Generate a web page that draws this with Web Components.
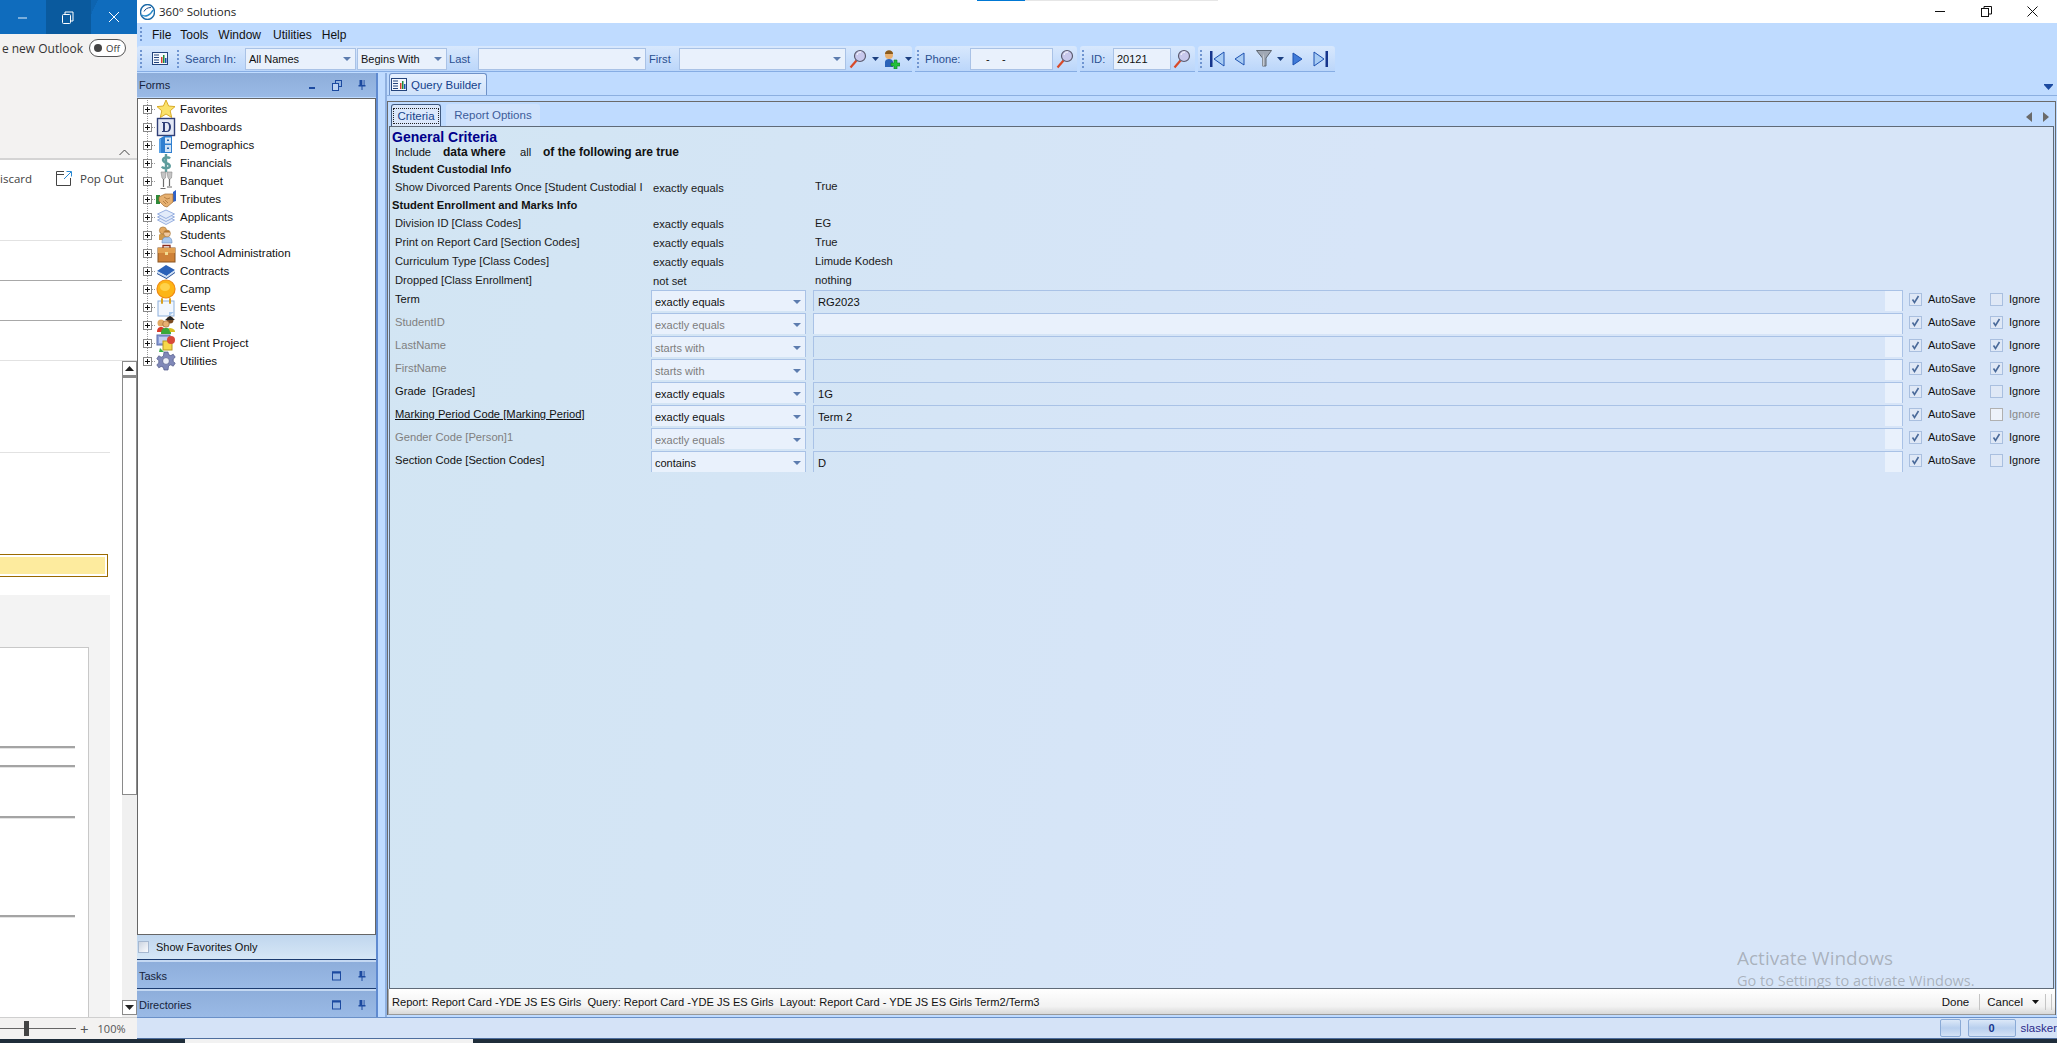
<!DOCTYPE html>
<html>
<head>
<meta charset="utf-8">
<title>360 Solutions</title>
<style>
  html, body { margin: 0; padding: 0; height: 100%; overflow: hidden; background: #1f2d3a; }
  body { font: 11px "Liberation Sans", Arial, sans-serif; color: #111; width: 2057px; height: 1043px; }
  #desk { display: flex; height: 1039px; }
</style>
</head>
<body>
<div id="desk">
  <outlook-side></outlook-side>
  <app-window>
    <title-bar>360° Solutions</title-bar>
    <menu-bar></menu-bar>
    <tool-bar></tool-bar>
    <main-area>
      <forms-pane slot="left">
        <tree-item icon="star">Favorites</tree-item>
        <tree-item icon="dash">Dashboards</tree-item>
        <tree-item icon="demo">Demographics</tree-item>
        <tree-item icon="dollar">Financials</tree-item>
        <tree-item icon="glass">Banquet</tree-item>
        <tree-item icon="hands">Tributes</tree-item>
        <tree-item icon="layers">Applicants</tree-item>
        <tree-item icon="people">Students</tree-item>
        <tree-item icon="case">School Administration</tree-item>
        <tree-item icon="book">Contracts</tree-item>
        <tree-item icon="sun">Camp</tree-item>
        <tree-item icon="cal">Events</tree-item>
        <tree-item icon="note">Note</tree-item>
        <tree-item icon="client">Client Project</tree-item>
        <tree-item icon="gear" last>Utilities</tree-item>
      </forms-pane>
      <query-builder slot="right">
        <info-row kind="title">General Criteria</info-row>
        <info-row kind="include"></info-row>
        <info-row kind="section" first>Student Custodial Info</info-row>
        <info-row op="exactly equals" value="True" tight>Show Divorced Parents Once [Student Custodial I</info-row>
        <info-row kind="section">Student Enrollment and Marks Info</info-row>
        <info-row op="exactly equals" value="EG">Division ID [Class Codes]</info-row>
        <info-row op="exactly equals" value="True">Print on Report Card [Section Codes]</info-row>
        <info-row op="exactly equals" value="Limude Kodesh">Curriculum Type [Class Codes]</info-row>
        <info-row op="not set" value="nothing">Dropped [Class Enrollment]</info-row>
        <crit-row op="exactly equals" value="RG2023">Term</crit-row>
        <crit-row op="exactly equals" off ignore lit>StudentID</crit-row>
        <crit-row op="starts with" off ignore>LastName</crit-row>
        <crit-row op="starts with" off ignore>FirstName</crit-row>
        <crit-row op="exactly equals" value="1G">Grade&nbsp; [Grades]</crit-row>
        <crit-row op="exactly equals" value="Term 2" link igoff>Marking Period Code [Marking Period]</crit-row>
        <crit-row op="exactly equals" off ignore>Gender Code [Person]1</crit-row>
        <crit-row op="contains" value="D">Section Code [Section Codes]</crit-row>
      </query-builder>
    </main-area>
    <status-bar></status-bar>
  </app-window>
</div>
<task-strip></task-strip>

<script>
// small svg icons shared by the elements
const ICONS = {
  star: `<polygon points="10,1 12.6,7 19,7.6 14.2,11.8 15.7,18.5 10,15 4.3,18.5 5.8,11.8 1,7.6 7.4,7" fill="#fbe26a" stroke="#d9ac2a"/>`,
  dash: `<rect x="1.500" y="1.500" width="17" height="17" fill="#e4e9f6" stroke="#2f3f78" stroke-width="1.400"/><path d="M6 5h4.500c3 0 4.500 2 4.500 5s-1.500 5-4.500 5H6v-1h1V6H6zM9 6v8h1.500c2 0 2.500-1.800 2.500-4s-.5-4-2.500-4z" fill="#2f3f78"/>`,
  demo: `<path d="M3 4l5-3h8v17H3z" fill="#2f7fd0"/><rect x="9" y="2.500" width="6" height="6" fill="#d8e8f8"/><rect x="9" y="10" width="6" height="7" fill="#cfe2f6"/><rect x="11" y="12.500" width="2" height="1.500" fill="#2060a8"/><rect x="11" y="4.500" width="2" height="1.500" fill="#2060a8"/><rect x="3" y="4" width="2" height="14" fill="#5ba3e6"/>`,
  dollar: `<path d="M14 5.500c-1-1.500-6.500-2-7 1.200-.5 3.800 7 2.800 6.800 6.300-.2 3-6.500 2.800-8 .6M10 1v18" fill="none" stroke="#5e9c9c" stroke-width="2.400"/>`,
  glass: `<path d="M5 1h5l-.5 6-2 1.500L6 7zM11 1h5l-.5 6-2 1.500L12 7z" fill="#c4c4c4" stroke="#8a8a8a" stroke-width=".6"/><path d="M7.500 8v8M13.500 8v7M4.500 17.500h5M11 16h5" stroke="#6e6e6e" stroke-width="1.200"/>`,
  hands: `<rect x="0" y="6" width="4" height="9" fill="#2e8a3a"/><path d="M17 3l3-2v11l-3 1z" fill="#2e62c8"/><path d="M3 8l6-3 8 0v8l-6 5-3-1-5-5z" fill="#e6b070" stroke="#a06a30" stroke-width=".7"/><path d="M8 8l3 2 3-1M7 12l3 3M9 11l3 3" stroke="#a06a30" fill="none" stroke-width=".7"/>`,
  layers: `<g fill="#e2ebfa" stroke="#8ea8dc" stroke-width=".9"><path d="M1.500 13L10 9l8.500 4-8.500 4.500z"/><path d="M1.500 10L10 6l8.500 4-8.500 4.500z"/><path d="M1.500 7L10 3l8.500 4-8.500 4.500z"/></g>`,
  people: `<path d="M3 10c1-2 7-2 8 0v5H3z" fill="#d09a4c"/><circle cx="7" cy="5.500" r="3.600" fill="#e2a860" stroke="#9a6a2a" stroke-width=".6"/><path d="M6 18c0-5 2-6 5-6s5 1 5 6z" fill="#a8c8ee" stroke="#6a8ab8" stroke-width=".6"/><circle cx="11" cy="8.500" r="3.400" fill="#f0c9a0" stroke="#9a6a2a" stroke-width=".6"/><path d="M7.800 7.500c1-3 5-3 6.400 0z" fill="#b4762c"/>`,
  case: `<path d="M7 5V2.500h7V5" fill="none" stroke="#8a2a1a" stroke-width="1.300"/><rect x="2" y="5" width="17" height="14" fill="#cf8238" stroke="#8a5420"/><rect x="2" y="5" width="17" height="5" fill="#e2a050"/><rect x="9" y="9" width="3" height="3" fill="#f3dc90"/>`,
  book: `<path d="M1 10l9-6 9 5-8.500 6z" fill="#2b62b8"/><path d="M1 10l9.500 5L19 9v2l-8.500 6L1 12z" fill="#cfe0f4"/><path d="M1 12l9.500 5L19 11v1l-8.500 6L1 13z" fill="#1f4a94"/>`,
  sun: `<circle cx="10" cy="10" r="9" fill="#fdb515" stroke="#f08a10" stroke-width="1.200"/><ellipse cx="9" cy="8" rx="5" ry="4" fill="#ffd24a"/>`,
  cal: `<rect x="2" y="4" width="16" height="15" fill="#f2f7fe" stroke="#8db0dc"/><path d="M13 19v-4h5z" fill="#a8c8ee"/><rect x="5" y="1" width="2" height="6" rx="1" fill="#d8a020"/><rect x="13" y="1" width="2" height="6" rx="1" fill="#d8a020"/>`,
  note: `<circle cx="5" cy="8" r="3.500" fill="#e2a860"/><path d="M1 17c0-4 2-5 4-5s4 1 4 5z" fill="#d83a2a"/><circle cx="14" cy="5" r="3.500" fill="#7a4a20"/><path d="M9 5L14 1l5 4z" fill="#222"/><circle cx="10" cy="9" r="3.300" fill="#e9b070" stroke="#7a4a20" stroke-width=".5"/><path d="M5 19c0-5 2-6 5-6s5 1 5 6z" fill="#3aa83a"/><path d="M13 13c3 0 6 1 6 4h-5z" fill="#d8c020"/>`,
  client: `<rect x="1" y="2" width="13" height="10" fill="#8c9fd8" stroke="#5a6ca8"/><rect x="3" y="4" width="9" height="6" fill="#c2cef0"/><rect x="7" y="8" width="9" height="9" fill="#f6d84a" stroke="#b89a20"/><circle cx="15" cy="7" r="4" fill="#d84a3a"/><path d="M4 15l4 4h-5z" fill="#3ab04a"/>`,
  gear: `<path d="M8 1h4l.6 2.600 2.200 1 2.400-1.400 2 3-2 1.800v2.400l2 1.800-2 3-2.400-1.400-2.200 1L12 19H8l-.6-2.600-2.200-1-2.400 1.400-2-3 2-1.800V9.600l-2-1.800 2-3 2.400 1.400 2.200-1z" fill="#8088b8" stroke="#4e5686" stroke-width=".7"/><circle cx="10" cy="10" r="3.400" fill="#eef0f8" stroke="#4e5686" stroke-width=".7"/>`
};

const LENS = `<svg width="18" height="20" viewBox="0 0 18 20"><path d="M1.500 18.500l6-7" stroke="#d84a2a" stroke-width="2.200"/><circle cx="11" cy="7" r="5.500" fill="#c8c8ec" stroke="#5a5a6e" stroke-width="1.200"/><path d="M8 6c.5-2 2-3 4-3" stroke="#fff" fill="none"/></svg>`;
const DROP = `<svg width="7" height="4" viewBox="0 0 7 4"><path d="M0 0h7L3.500 4z" fill="#1c3f80"/></svg>`;
const PIN = `<svg width="10" height="12" viewBox="0 0 10 12"><path d="M2.500 1h5v5h1v1.500h-3V11h-1V7.500h-3V6h1z" fill="#1c4aa0"/><rect x="5.500" y="1" width="1" height="5" fill="#bcd2f2"/></svg>`;
const WIN = `<svg width="10" height="10" viewBox="0 0 10 10"><rect x=".5" y="1" width="8" height="8" fill="none" stroke="#1c4aa0"/><rect x="0" y=".5" width="9" height="2" fill="#1c4aa0"/></svg>`;
const REPORT = `<svg width="16" height="13" viewBox="0 0 16 13"><rect x=".5" y=".5" width="15" height="12" fill="#f4f8fe" stroke="#24447c"/><path d="M2 3h5M2 5.500h5M2 8h5M2 10.500h5" stroke="#24447c"/><rect x="9" y="5" width="1.500" height="6" fill="#d8402a"/><rect x="11" y="3" width="1.500" height="8" fill="#1c8a3a"/><rect x="13" y="6" width="1.500" height="5" fill="#1c50b0"/></svg>`;

class OutlookSide extends HTMLElement {
  connectedCallback() {
    this.attachShadow({ mode: "open" });
    this.shadowRoot.innerHTML = `
    <style>
      :host { display: flex; flex-direction: column; width: 137px; height: 1039px; background: #fff; color: #333; font: 12px "Open Sans", sans-serif; overflow: hidden; }
      .head { height: 34px; flex: none; display: flex; justify-content: flex-end; background: #0f6cbd linear-gradient(115deg, #0f6cbd 60%, #0d64b0 60%, #0d64b0 64%, #0f6cbd 64%); color: #e6f0fa; }
      .head div { width: 46px; display: flex; align-items: center; justify-content: center; }
      .head .hover { background: #0a5a9e; }
      .ribbon { height: 126px; flex: none; box-sizing: border-box; background: #f3f2f1; border-bottom: 2px solid #d4d4d4; position: relative; }
      .outlook { height: 28px; display: flex; align-items: center; justify-content: flex-end; gap: 6px; padding-right: 11px; white-space: nowrap; }
      .toggle { width: 37px; height: 18px; box-sizing: border-box; flex: none; border: 1px solid #555; border-radius: 10px; display: flex; align-items: center; padding-left: 4px; gap: 4px; font-size: 9.500px; background: #fff; }
      .toggle i { width: 8px; height: 8px; border-radius: 50%; background: #444; }
      .chev { position: absolute; left: 119px; top: 115px; }
      .act { height: 81px; box-sizing: border-box; width: 122px; border-bottom: 1px solid #e2e2e2; position: relative; padding-top: 8px; }
      .act .row { display: flex; align-items: center; height: 20px; white-space: nowrap; color: #424242; font-size: 11.500px; }
      .act .dis { width: 32px; flex: none; font-size: 11.500px; }
      .line { height: 40px; box-sizing: border-box; width: 122px; border-bottom: 1px solid #a8a8a8; flex: none; }
      .line.wide { width: 137px; border-bottom-color: #e2e2e2; }
      .body { flex: 1; display: flex; min-height: 0; }
      .page { width: 122px; flex: none; display: flex; flex-direction: column; }
      .top { height: 92px; box-sizing: border-box; width: 110px; border-bottom: 1px solid #e2e2e2; flex: none; }
      .note { height: 23px; width: 108px; flex: none; box-sizing: border-box; margin-top: 101px; border: 1px solid #9a6a00; border-left: 0; padding: 2px 2px 2px 0; background: #fff; }
      .note div { height: 100%; background: #fdeb9e; }
      .grey { width: 110px; flex: 1; margin-top: 18px; background: #f3f3f3; padding-top: 52px; box-sizing: border-box; min-height: 0; }
      .paper { width: 89px; height: 100%; box-sizing: border-box; background: #fff; border: 1px solid #c8c8c8; border-width: 1px 1px 0 0; position: relative; }
      .rule { position: absolute; left: 0; width: 75px; height: 2px; background: #a4a4a4; border-bottom: 1px solid #e4e4e4; }
      .sb { width: 15px; flex: none; display: flex; flex-direction: column; background: #f0f0f0; }
      .sb .btn { height: 15px; box-sizing: border-box; border: 1px solid #8a8a8a; background: #fff; display: flex; align-items: center; justify-content: center; flex: none; }
      .sb .thumb { height: 419px; flex: none; box-sizing: border-box; border: 1px solid #8a8a8a; border-top-width: 2px; background: #fff; }
      .sb .gap { flex: 1; }
      .zoom { height: 22px; flex: none; box-sizing: border-box; background: #f3f2f1; border-top: 1px solid #cfcfcf; display: flex; align-items: center; position: relative; font-size: 11px; color: #555; }
      .zoom .track { width: 76px; height: 1px; background: #666; position: relative; flex: none; }
      .zoom .track i { position: absolute; left: 24px; top: -7px; width: 5px; height: 15px; background: #444; }
      .zoom .plus { margin-left: 4px; font-size: 15px; }
      .zoom .pct { margin-left: 9px; }
    </style>
    <div class="head">
      <div><svg width="11" height="11"><path d="M1 6h9" stroke="#e6f0fa"/></svg></div>
      <div class="hover"><svg width="12" height="13"><rect x=".5" y="3.500" width="8" height="9" rx="1" fill="none" stroke="#fff"/><path d="M3 3V1h8v9H9" fill="none" stroke="#fff"/></svg></div>
      <div><svg width="12" height="12"><path d="M1 1l10 10M11 1L1 11" stroke="#fff"/></svg></div>
    </div>
    <div class="ribbon">
      <div class="outlook"><span>e new Outlook</span><span class="toggle"><i></i>Off</span></div>
      <svg class="chev" width="11" height="7"><path d="M.5 6L5.500 1l5 5" fill="none" stroke="#444"/></svg>
    </div>
    <div class="act">
      <div class="row">
        <span class="dis">iscard</span>
        <svg width="17" height="16" style="margin:0 7px 0 24px;flex:none"><path d="M8 1.500H.5v14h14V8" fill="none" stroke="#444"/><path d="M.5 4.500H8" stroke="#444"/><path d="M8 9l7-7M10.500 1.500h5v5" fill="none" stroke="#2a8ad4"/></svg>
        <span>Pop Out</span>
      </div>
    </div>
    <div class="line"></div>
    <div class="line"></div>
    <div class="line wide" style="height:40px"></div>
    <div class="body">
      <div class="page">
        <div class="top"></div>
        <div class="note"><div></div></div>
        <div class="grey">
          <div class="paper">
            <div class="rule" style="top:98px"></div>
            <div class="rule" style="top:117px"></div>
            <div class="rule" style="top:168px"></div>
            <div class="rule" style="top:267px"></div>
          </div>
        </div>
      </div>
      <div class="sb">
        <div class="btn"><svg width="9" height="5"><path d="M0 5h9L4.500 0z" fill="#222"/></svg></div>
        <div class="thumb"></div>
        <div class="gap"></div>
        <div class="btn" style="margin-bottom:2px"><svg width="9" height="5"><path d="M0 0h9L4.500 5z" fill="#222"/></svg></div>
      </div>
    </div>
    <div class="zoom"><span class="track"><i></i></span><span class="plus">+</span><span class="pct">100%</span></div>`;
  }
}

class AppWindow extends HTMLElement {
  connectedCallback() {
    this.attachShadow({ mode: "open" });
    this.shadowRoot.innerHTML = `
    <style>
      :host { display: flex; flex-direction: column; flex: 1; min-width: 0; height: 1039px; background: #bfdbff; overflow: hidden; }
    </style>
    <slot></slot>`;
  }
}

class TitleBar extends HTMLElement {
  connectedCallback() {
    this.attachShadow({ mode: "open" });
    this.shadowRoot.innerHTML = `
    <style>
      :host { display: flex; align-items: center; height: 23px; flex: none; background: #fff; position: relative; font: 11.500px "Open Sans", sans-serif; color: #222; }
      .logo { margin-left: 3px; margin-right: 4px; }
      .prog { position: absolute; left: 840px; top: 0; width: 241px; height: 1px; background: linear-gradient(90deg, #0078d4 48px, #e6e6e6 48px); }
      .btns { margin-left: auto; display: flex; padding-right: 2px; }
      .btns div { width: 46px; height: 23px; display: flex; align-items: center; justify-content: center; }
    </style>
    <svg class="logo" width="15" height="16" viewBox="0 0 15 16"><ellipse cx="7.500" cy="8" rx="7" ry="7.500" fill="#fff" stroke="#1c6aa8" stroke-width="1.400"/><path d="M2 11c3 2 8 1 11-5" stroke="#2a8ac8" fill="none" stroke-width="1.500"/><path d="M4 7.500c1-2 3-4 7-4" stroke="#1c4a88" fill="none"/></svg>
    <slot></slot>
    <div class="prog"></div>
    <div class="btns">
      <div><svg width="11" height="11"><path d="M0 5.500h10" stroke="#111"/></svg></div>
      <div><svg width="11" height="11"><rect x=".5" y="2.500" width="7" height="8" fill="none" stroke="#111"/><path d="M3 2V.5h7.500v7.500H8" fill="none" stroke="#111"/></svg></div>
      <div><svg width="11" height="11"><path d="M.5.500l10 10M10.500.500l-10 10" stroke="#111"/></svg></div>
    </div>`;
  }
}

class MenuBar extends HTMLElement {
  connectedCallback() {
    this.attachShadow({ mode: "open" });
    this.shadowRoot.innerHTML = `
    <style>
      :host { display: flex; align-items: center; height: 23px; flex: none; background: #bfdbff; font-size: 12px; color: #111; }
      .grip { width: 2px; height: 15px; margin-left: 3px; background: repeating-linear-gradient(#6f94d0 0 2px, transparent 2px 4px); }
      span { margin-right: 10px; white-space: nowrap; }
      span:first-of-type { margin-left: 10px; margin-right: 9px; }
      span:nth-of-type(3) { margin-right: 12px; }
    </style>
    <div class="grip"></div>
    <span>File</span><span>Tools</span><span>Window</span><span>Utilities</span><span>Help</span>`;
  }
}

class ComboBox extends HTMLElement {
  connectedCallback() {
    const off = this.hasAttribute("off");
    this.attachShadow({ mode: "open" });
    this.shadowRoot.innerHTML = `
    <style>
      :host { display: flex; align-items: center; box-sizing: border-box; height: var(--combo-h, 21px); padding: 1px 0 0 3px; background: #e9f1fc; border: 1px solid #a9c2e6; border-width: var(--combo-bw, 1px 1px 0 1px); color: ${off ? "#7d7d7d" : "#111"}; white-space: nowrap; }
      :host(:not([arrowless]))::after { content: ""; margin-left: auto; margin-right: 4px; border: 4px solid transparent; border-top: 4px solid #5c7cae; border-bottom: 0; }
    </style>
    <slot></slot>`;
  }
}

class ToolBar extends HTMLElement {
  connectedCallback() {
    this.attachShadow({ mode: "open" });
    this.shadowRoot.innerHTML = `
    <style>
      :host { display: flex; height: 27px; flex: none; background: #bfdbff; --combo-h: 22px; --combo-bw: 1px; color: #111; }
      .band { height: 26px; box-sizing: border-box; display: flex; align-items: center; border-bottom: 1px solid #86ade4; border-radius: 3px 3px 0 0; background: linear-gradient(#d8e8fd, #bbd6fa); margin-right: 3px; flex: none; }
      .grip { width: 2px; height: 18px; flex: none; background: repeating-linear-gradient(#6f94d0 0 2px, transparent 2px 4px); }
      .lbl { color: #2a4f90; flex: none; white-space: nowrap; font-size: 11.200px; }
      .i { display: flex; align-items: center; justify-content: center; flex: none; }
      combo-box { flex: none; padding-top: 0; }
    </style>
    <div class="band" style="width:775px">
      <div class="grip" style="margin-left:3px"></div>
      <div class="i" style="width:16px;margin-left:10px">${REPORT}</div>
      <div class="grip" style="margin-left:9px"></div>
      <span class="lbl" style="width:60px;margin-left:6px">Search In:</span>
      <combo-box style="width:111px">All Names</combo-box>
      <combo-box style="width:90px;margin-left:1px">Begins With</combo-box>
      <span class="lbl" style="width:29px;margin-left:2px">Last</span>
      <combo-box style="width:168px"></combo-box>
      <span class="lbl" style="width:30px;margin-left:3px">First</span>
      <combo-box style="width:167px"></combo-box>
      <div class="i" style="width:18px;margin-left:3px">${LENS}</div>
      <div class="i" style="width:7px;margin-left:5px">${DROP}</div>
      <div class="i" style="width:18px;margin-left:3px"><svg width="18" height="20" viewBox="0 0 18 20"><path d="M3 18v-5c0-2 2-3 4-3s4 1 4 3v5z" fill="#2a62b8"/><circle cx="7" cy="6" r="4" fill="#e8b070"/><path d="M3 5c0-5 8-5 8 0z" fill="#8a5a1c"/><path d="M12 11h3v3h3v3h-3v3h-3v-3H9v-3h3z" fill="#22c03a" stroke="#0e7a1e" stroke-width=".6"/></svg></div>
      <div class="i" style="width:7px;margin-left:5px">${DROP}</div>
    </div>
    <div class="band" style="width:162px">
      <div class="grip" style="margin-left:2px"></div>
      <span class="lbl" style="width:45px;margin-left:6px">Phone:</span>
      <combo-box arrowless style="width:83px;padding-left:15px">-&nbsp;&nbsp;&nbsp; -</combo-box>
      <div class="i" style="width:18px;margin-left:3px">${LENS}</div>
    </div>
    <div class="band" style="width:115px">
      <div class="grip" style="margin-left:2px"></div>
      <span class="lbl" style="width:22px;margin-left:7px">ID:</span>
      <combo-box arrowless style="width:58px">20121</combo-box>
      <div class="i" style="width:18px;margin-left:2px">${LENS}</div>
    </div>
    <div class="band" style="width:137px;margin-right:0">
      <div class="grip" style="margin-left:2px"></div>
      <div class="i" style="width:15px;margin-left:8px"><svg width="15" height="16" viewBox="0 0 15 16"><rect x="0" y="0" width="2.500" height="16" fill="#16358c"/><path d="M14 1L4 8l10 7z" fill="#a8ccf4" stroke="#1c50b0"/></svg></div>
      <div class="i" style="width:11px;margin-left:9px"><svg width="11" height="14" viewBox="0 0 11 14"><path d="M10 1L1 7l9 6z" fill="#a8ccf4" stroke="#1c50b0"/></svg></div>
      <div class="i" style="width:16px;margin-left:11px"><svg width="16" height="17" viewBox="0 0 16 17"><path d="M.5.500h15L10 8v8H6.500V8z" fill="#a0a8b4" stroke="#5e6670"/><path d="M6.500 8v8h1.500V3" fill="#d4d8de" opacity=".7"/></svg></div>
      <div class="i" style="width:7px;margin-left:5px">${DROP}</div>
      <div class="i" style="width:11px;margin-left:8px"><svg width="11" height="14" viewBox="0 0 11 14"><path d="M1 1l9 6-9 6z" fill="#3f7ad8" stroke="#1c50b0"/></svg></div>
      <div class="i" style="width:15px;margin-left:10px"><svg width="15" height="16" viewBox="0 0 15 16"><rect x="12.500" y="0" width="2.500" height="16" fill="#16358c"/><path d="M1 1l10 7-10 7z" fill="#a8ccf4" stroke="#1c50b0"/></svg></div>
    </div>`;
  }
}

class MainArea extends HTMLElement {
  connectedCallback() {
    this.attachShadow({ mode: "open" });
    this.shadowRoot.innerHTML = `
    <style>
      :host { display: flex; height: 944px; flex: none; background: #bfdbff; }
      .split { width: 11px; flex: none; background: linear-gradient(90deg, #5f8ad0 0 2px, #bfdbff 2px 9px, #8fb0e0 9px); }
    </style>
    <slot name="left"></slot><div class="split"></div><slot name="right"></slot>`;
  }
}

class FormsPane extends HTMLElement {
  connectedCallback() {
    this.attachShadow({ mode: "open" });
    this.shadowRoot.innerHTML = `
    <style>
      :host { display: flex; flex-direction: column; width: 239px; flex: none; background: #bfdbff; }
      .bar { display: flex; align-items: center; height: 24px; flex: none; padding: 0 2px; background: linear-gradient(#8dadda, #9abae6); color: #16233c; }
      .bar.low { height: 29px; box-sizing: border-box; border-top: 1px solid #1c3c70; box-shadow: inset 0 2px 0 #c4d8f2; padding-top: 3px; }
      .bar span { flex: 1; }
      .bar i { width: 25px; display: flex; justify-content: center; }
      .tree { flex: 1; box-sizing: border-box; margin-top: 1px; background: #fff; border: 1px solid #666; padding-top: 1px; min-height: 0; }
      .fav { height: 24px; flex: none; box-sizing: border-box; display: flex; align-items: center; gap: 7px; padding-left: 1px; background: linear-gradient(#c0d6ee, #d6e7f6); }
      .fav b { width: 11px; height: 12px; box-sizing: border-box; border: 1px solid #a6b8d0; background: linear-gradient(135deg, #ccd4e0, #fafcff); }
      .fav span { font-size: 11px; }
    </style>
    <div class="bar"><span>Forms</span>
      <i><svg width="8" height="10"><rect x="1" y="7" width="6" height="2" fill="#1c4aa0"/></svg></i>
      <i><svg width="10" height="11"><rect x="3.500" y=".5" width="6" height="6" fill="none" stroke="#1c4aa0"/><rect x=".5" y="3.500" width="6" height="7" fill="#bcd2f2" stroke="#1c4aa0"/></svg></i>
      <i>${PIN}</i></div>
    <div class="tree"><slot></slot></div>
    <div class="fav"><b></b><span>Show Favorites Only</span></div>
    <div class="bar low"><span>Tasks</span><i>${WIN}</i><i>${PIN}</i></div>
    <div class="bar low"><span>Directories</span><i>${WIN}</i><i>${PIN}</i></div>`;
  }
}

class TreeItem extends HTMLElement {
  connectedCallback() {
    const name = this.getAttribute("icon");
    this.attachShadow({ mode: "open" });
    this.shadowRoot.innerHTML = `
    <style>
      :host { display: flex; align-items: center; height: 18px; padding-left: 5px; font-size: 11.500px; color: #111; white-space: nowrap;
        background: repeating-linear-gradient(#999 0 1px, transparent 1px 2px) 9px 0 / 1px ${this.hasAttribute("last") ? "50%" : "100%"} no-repeat; }
      .box { width: 9px; height: 9px; box-sizing: border-box; border: 1px solid #888; background: #fff; flex: none; }
      .dots { width: 4px; height: 1px; flex: none; background: repeating-linear-gradient(90deg, #999 0 1px, transparent 1px 2px); }
      svg.ic { width: 20px; height: 20px; flex: none; margin-right: 4px; }
    </style>
    <svg class="box" viewBox="0 0 7 7"><path d="M1 3.500h5M3.500 1v5" stroke="#111"/></svg>
    <div class="dots"></div>
    <svg class="ic" viewBox="0 0 20 20">${ICONS[name] || ""}</svg>
    <slot></slot>`;
  }
}

class QueryBuilder extends HTMLElement {
  connectedCallback() {
    this.attachShadow({ mode: "open" });
    this.shadowRoot.innerHTML = `
    <style>
      :host { display: flex; flex-direction: column; flex: 1; min-width: 0; background: #bfdbff; }
      .docs { height: 23px; flex: none; box-sizing: border-box; border-bottom: 1px solid #8cafe0; padding-left: 2px; display: flex; position: relative; }
      .doc { width: 98px; height: 22px; box-sizing: border-box; display: flex; align-items: center; gap: 4px; padding-left: 1px; background: linear-gradient(#e6f0fe, #cfe2fa); border: 1px solid #6f92c8; border-bottom: 0; border-radius: 3px 3px 0 0; font-weight: 500; color: #15428b; font-size: 11.500px; white-space: nowrap; }
      .arrow { position: absolute; right: 4px; top: 11px; }
      .outer { margin-top: 5px; flex: 1; margin-right: 1px; box-sizing: border-box; border: 1px solid #6a6a6a; border-bottom: 0; display: flex; flex-direction: column; min-height: 0; }
      .tabs { height: 24px; flex: none; display: flex; align-items: flex-end; padding-left: 3px; gap: 5px; position: relative; }
      .tab { height: 22px; box-sizing: border-box; display: flex; align-items: center; justify-content: center; border-radius: 3px 3px 0 0; white-space: nowrap; font-size: 11.500px; }
      .tab.on { width: 50px; background: #dbe8fb; border: 1px solid #405a80; border-bottom: 0; color: #15428b; }
      .tab.on span { outline: 1px dotted #222; padding: 1px 3px; }
      .tab.off { width: 94px; background: #cfe2fc; color: #3c5c9a; }
      .scroll { position: absolute; right: 6px; top: 10px; display: flex; gap: 11px; }
      .panel { flex: 1; position: relative; box-sizing: border-box; margin: 0 1px 0 1px; border: 1px solid #5f6a78; padding-top: 2px; overflow: hidden; min-height: 0; background: linear-gradient(100deg, #d2e5f3, #d7e5f8 55%, #d7e5f8); }
      .wm { position: absolute; left: 1347px; top: 819px; color: rgba(105, 105, 105, .42); font-family: "Open Sans", sans-serif; white-space: nowrap; pointer-events: none; }
      .wm div:first-child { font-size: 19px; line-height: 24px; margin-bottom: 4px; }
      .wm div:last-child { font-size: 14.500px; line-height: 14px; }
      .foot { height: 26px; flex: none; box-sizing: border-box; display: flex; align-items: center; padding-left: 3px; white-space: pre; background: linear-gradient(#fff, #f2f2f2 70%, #d8d8d8); border-bottom: 1px solid #999; border-left: 1px solid #aaa; color: #111; font-size: 11.500px; }
      .foot > span { font-size: 11.100px; }
      .foot .r { margin-left: auto; display: flex; align-items: center; height: 100%; }
      .sep { width: 1px; height: 16px; background: #c4c4c4; flex: none; }
      .gap2 { height: 2px; flex: none; }
    </style>
    <div class="docs">
      <div class="doc">${REPORT}<span>Query Builder</span></div>
      <svg class="arrow" width="9" height="6"><path d="M0 0h9v1L4.500 6 0 1z" fill="#1c4aa0"/></svg>
    </div>
    <div class="outer">
      <div class="tabs">
        <div class="tab on"><span>Criteria</span></div>
        <div class="tab off">Report Options</div>
        <div class="scroll">
          <svg width="6" height="10"><path d="M6 0v10L0 5z" fill="#6a6a6a"/></svg>
          <svg width="6" height="10"><path d="M0 0v10l6-5z" fill="#6a6a6a"/></svg>
        </div>
      </div>
      <div class="panel">
        <slot></slot>
        <div class="wm"><div>Activate Windows</div><div>Go to Settings to activate Windows.</div></div>
      </div>
      <div class="foot"><span>Report: Report Card -YDE JS ES Girls  Query: Report Card -YDE JS ES Girls  Layout: Report Card - YDE JS ES Girls Term2/Term3</span>
        <div class="r">
          <span>Done</span><span class="sep" style="margin:0 7px 0 10px"></span><span>Cancel</span>
          <svg width="7" height="4" style="margin:0 6px 0 9px"><path d="M0 0h7L3.500 4z" fill="#111"/></svg>
          <span class="sep" style="margin-right:5px"></span><span class="sep" style="margin-right:3px"></span>
        </div>
      </div>
    </div>
    <div class="gap2"></div>`;
  }
}

class InfoRow extends HTMLElement {
  connectedCallback() {
    const kind = this.getAttribute("kind");
    this.attachShadow({ mode: "open" });
    if (kind === "include") {
      this.shadowRoot.innerHTML = `
      <style>
        :host { display: flex; align-items: center; height: 13px; padding-left: 5px; font-size: 11.200px; white-space: nowrap; }
        b { font-weight: 700; font-size: 12px; }
      </style>
      <span style="width:48px">Include</span><b style="width:77px">data where</b><span style="width:23px">all</span><b>of the following are true</b>`;
      return;
    }
    if (kind === "title") {
      this.shadowRoot.innerHTML = `
      <style>:host { display: block; height: 16px; line-height: 16px; padding-left: 2px; font-size: 14px; font-weight: 700; color: #00008b; white-space: nowrap; }</style>
      <slot></slot>`;
      return;
    }
    if (kind === "section") {
      this.shadowRoot.innerHTML = `
      <style>:host { display: flex; align-items: center; height: 18px; padding-left: 2px; font-weight: 700; font-size: 11.200px; white-space: nowrap; }
      :host([first]) { margin-top: 2px; }</style>
      <slot></slot>`;
      return;
    }
    this.shadowRoot.innerHTML = `
    <style>
      :host { display: grid; grid-template-columns: 258px 162px 1fr; align-items: center; height: 19px; padding-left: 5px; white-space: nowrap; font-size: 11.200px; color: #1a1a1a; }
      :host([tight]) { height: 18px; }
      .a { overflow: hidden; padding-bottom: 1px; }
      .b { padding-top: 1px; }
      .c { padding-bottom: 2px; }
    </style>
    <div class="a"><slot></slot></div><div class="b">${this.getAttribute("op")}</div><div class="c">${this.getAttribute("value")}</div>`;
  }
}

class CheckField extends HTMLElement {
  connectedCallback() {
    this.attachShadow({ mode: "open" });
    const on = this.hasAttribute("on");
    const off = this.hasAttribute("off");
    this.shadowRoot.innerHTML = `
    <style>
      :host { display: flex; align-items: center; gap: 6px; font-size: 11px; white-space: nowrap; color: ${off ? "#888" : "#111"}; }
      svg { flex: none; }
    </style>
    <svg width="13" height="13" viewBox="0 0 13 13"><rect x=".5" y=".5" width="12" height="12" fill="${off ? "#edf2fa" : "#dfe8f6"}" stroke="${off ? "#b0b0b0" : "#a9bfdf"}"/>${on ? `<path d="M3.500 6.500l2 3 4-6.500" fill="none" stroke="#4a6a9a" stroke-width="1.600"/>` : ""}</svg>
    <span><slot></slot></span>`;
  }
}

class CritRow extends HTMLElement {
  connectedCallback() {
    const off = this.hasAttribute("off");
    const lit = this.hasAttribute("lit");
    const link = this.hasAttribute("link");
    const ignore = this.hasAttribute("ignore");
    const igoff = this.hasAttribute("igoff");
    this.attachShadow({ mode: "open" });
    this.shadowRoot.innerHTML = `
    <style>
      :host { display: grid; grid-template-columns: 256px 155px 1097px 81px 62px; align-items: start; height: 23px; padding-left: 5px; font-size: 11.200px; white-space: nowrap; }
      .lbl { height: 18px; line-height: 18px; color: ${off ? "#808080" : "#111"}; ${link ? "text-decoration: underline;" : ""} }
      .val { margin-left: 7px; height: 21px; box-sizing: border-box; border: 1px solid #a9c2e6; border-width: 1px 1px 0 1px; display: flex; align-items: center; padding: 2px 0 0 4px; position: relative; background: ${lit ? "#e9f1fc" : "transparent"}; }
      .val::after { content: ""; position: absolute; right: 0; top: 0; bottom: 0; width: 17px; background: #e9f1fc; }
      .chk { margin-left: 6px; height: 18px; display: flex; align-items: center; }
      .chk.i { margin-left: 6px; }
      combo-box { font-size: 11px; }
    </style>
    <div class="lbl"><slot></slot></div>
    <combo-box ${off ? "off" : ""}>${this.getAttribute("op")}</combo-box>
    <div class="val">${this.getAttribute("value") || ""}</div>
    <div class="chk"><check-field on>AutoSave</check-field></div>
    <div class="chk i"><check-field ${ignore ? "on" : ""} ${igoff ? "off" : ""}>Ignore</check-field></div>`;
  }
}

class StatusBar extends HTMLElement {
  connectedCallback() {
    this.attachShadow({ mode: "open" });
    this.shadowRoot.innerHTML = `
    <style>
      :host { display: flex; align-items: center; height: 22px; flex: none; box-sizing: border-box; background: #d5e3f7; border-top: 1px solid #6a90c8; border-bottom: 1px solid #4e6e9e; }
      .p { height: 18px; box-sizing: border-box; border: 1px solid #8aaad6; border-radius: 2px; background: linear-gradient(#dce8f8, #b8cfee 50%, #d4e2f6); display: flex; align-items: center; justify-content: center; flex: none; color: #16358c; font-weight: 700; }
      .u { color: #2a2a8a; margin-left: 5px; white-space: nowrap; font-size: 11.500px; }
    </style>
    <div style="flex:1"></div>
    <div class="p" style="width:21px;margin-right:7px"></div>
    <div class="p" style="width:48px">0</div>
    <span class="u">slasker</span>`;
  }
}

class TaskStrip extends HTMLElement {
  connectedCallback() {
    this.attachShadow({ mode: "open" });
    this.shadowRoot.innerHTML = `
    <style>
      :host { display: block; height: 4px; background: #1f2d3a; padding-left: 185px; }
      div { width: 288px; height: 4px; background: #f2f2f2; }
    </style>
    <div></div>`;
  }
}

customElements.define("outlook-side", OutlookSide);
customElements.define("app-window", AppWindow);
customElements.define("title-bar", TitleBar);
customElements.define("menu-bar", MenuBar);
customElements.define("combo-box", ComboBox);
customElements.define("tool-bar", ToolBar);
customElements.define("main-area", MainArea);
customElements.define("forms-pane", FormsPane);
customElements.define("tree-item", TreeItem);
customElements.define("query-builder", QueryBuilder);
customElements.define("info-row", InfoRow);
customElements.define("check-field", CheckField);
customElements.define("crit-row", CritRow);
customElements.define("status-bar", StatusBar);
customElements.define("task-strip", TaskStrip);
</script>
</body>
</html>
